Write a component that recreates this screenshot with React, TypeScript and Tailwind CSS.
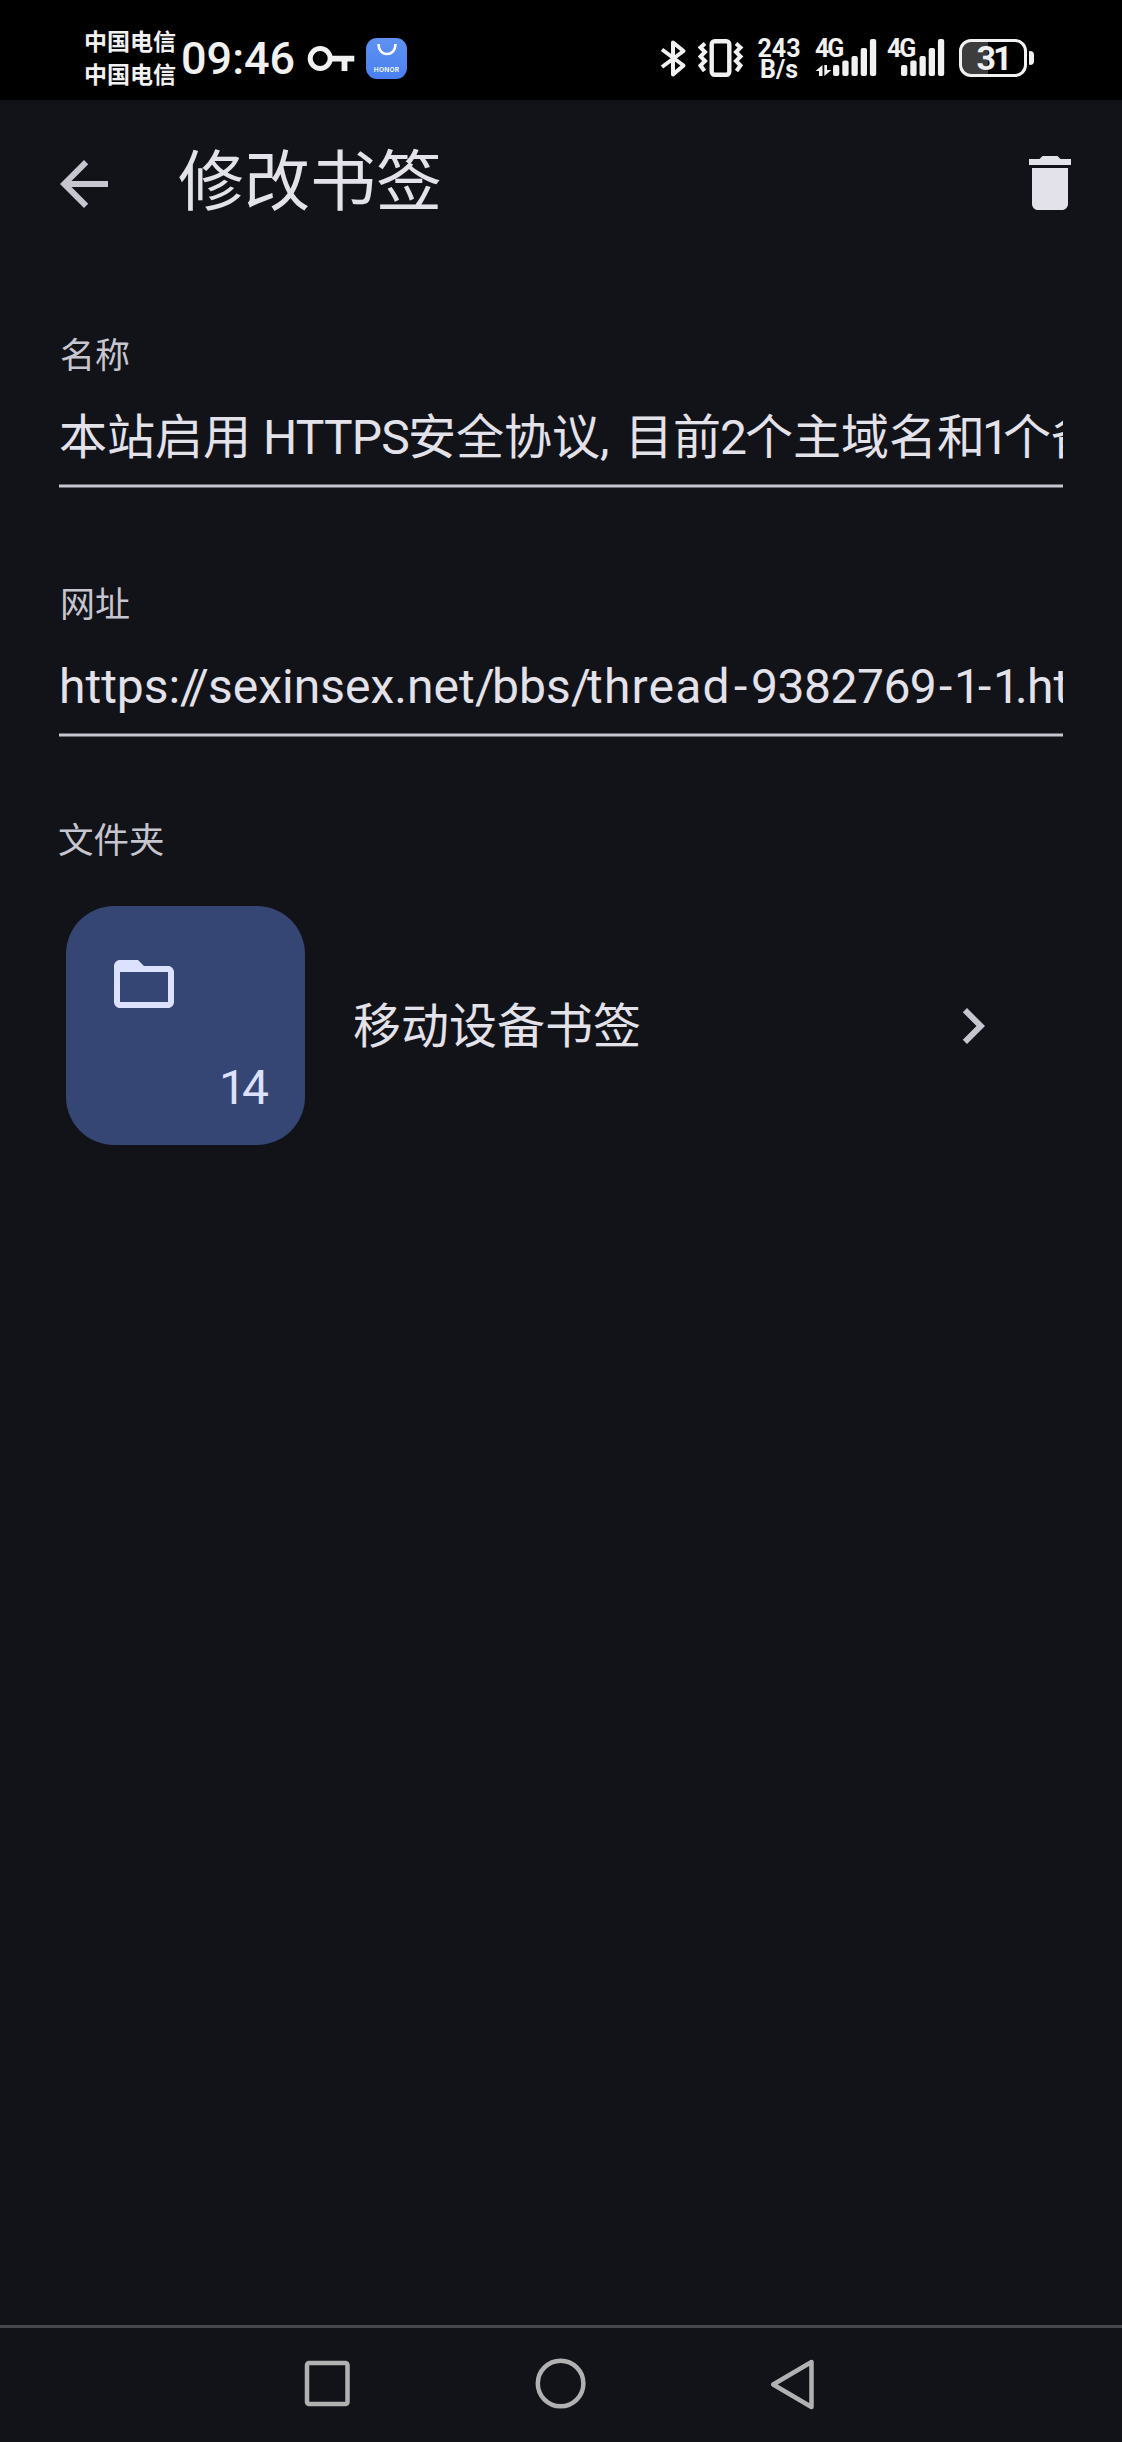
import type { ReactNode } from "react";

const CJK = "font-['Noto_Sans_CJK_SC',sans-serif]";
const MIXED = "font-[Roboto,'Noto_Sans_CJK_SC',sans-serif]";

function Signal({ data = false }: { data?: boolean }) {
  return (
    <svg width="62" height="40" viewBox="0 0 62 40" fill="#f1f1f1" className="absolute left-0 top-0">
      {data && <path d="M0.500 33L7.500 27v11H4v-5zM9.300 27H12v5h4.500L9.300 38z" />}
      <rect x="18" y="27" width="6.300" height="11" rx="2" />
      <rect x="27.300" y="22.500" width="6.300" height="15.500" rx="2" />
      <rect x="36.500" y="18" width="6.300" height="20" rx="2" />
      <rect x="45.700" y="10" width="6.300" height="28" rx="2" />
      <rect x="54.900" y="1" width="6.300" height="37" rx="2" />
    </svg>
  );
}

function StatusBar() {
  return (
    <div className="flex h-[100px] shrink-0 items-start bg-black text-[#f1f1f1]">
      <div className="ml-[84px] mt-[24px] w-[92px] text-[23px] font-bold leading-[33px] whitespace-nowrap font-['Noto_Sans_CJK_SC',sans-serif]">
        <div>中国电信</div>
        <div>中国电信</div>
      </div>
      <div className="ml-[5px] mt-[33px] w-[115px] font-[Roboto,sans-serif] text-[45px] font-medium leading-[52px] whitespace-nowrap">09:46</div>
      <svg className="ml-[10px] mt-[38px]" width="50" height="40" viewBox="0 0 50 40" fill="none" stroke="#f1f1f1">
        <circle cx="14.200" cy="20.500" r="10" strokeWidth="5" />
        <path d="M24 20.600H48.300M38.500 20V33" strokeWidth="5.800" />
      </svg>
      <div className="ml-[10px] mt-[38px] flex h-[41px] w-[41px] flex-col items-center rounded-[11px] bg-linear-to-b from-[#5f92f2] to-[#4a7ff0]">
        <svg className="mt-[5px]" width="24" height="15" viewBox="0 0 24 15" fill="none" stroke="#fff" strokeWidth="2.600">
          <path d="M3.500 1c0 6 3.500 10 8.500 10s8.500-4 8.500-10" />
        </svg>
        <span className="mt-[8px] font-[Inter,sans-serif] text-[6.500px] font-semibold leading-[9px] tracking-[0.300px] text-white">HONOR</span>
      </div>
      <svg className="ml-[253px] mt-[39px]" width="28" height="40" viewBox="0 0 28 40" fill="none" stroke="#f1f1f1" strokeWidth="4" strokeLinejoin="round">
        <path d="M2 10.500L23.500 26.500 13 35.500V3.500L23.500 12 2 28" />
      </svg>
      <svg className="ml-[10px] mt-[38px]" width="46" height="40" viewBox="0 0 46 40" fill="none" stroke="#f1f1f1">
        <rect x="13.700" y="3.200" width="17.600" height="33.600" rx="3" strokeWidth="4.400" />
        <path d="M7 5.500L2.500 9.500 7 14 2.500 18.500 7 23 2.500 27.500 6.500 33M38 5.500L42.500 9.500 38 14 42.500 18.500 38 23 42.500 27.500 38.500 33" strokeWidth="4" />
      </svg>
      <div className="ml-[10px] mt-[38px] w-[50px] text-center font-[Roboto,sans-serif] text-[25px] font-bold leading-[21px] whitespace-nowrap">
        <div>243</div>
        <div>B/s</div>
      </div>
      <div className="relative ml-[11px] mt-[38px] h-[40px] w-[62px]">
        <span className="block w-[28px] font-[Roboto,sans-serif] text-[25px] font-bold leading-[22px] tracking-[-2px]">4G</span>
        <Signal data />
      </div>
      <div className="relative ml-[6px] mt-[38px] h-[40px] w-[62px]">
        <span className="block w-[28px] pl-[4px] font-[Roboto,sans-serif] text-[25px] font-bold leading-[22px] tracking-[-2px]">4G</span>
        <Signal />
      </div>
      <div className="ml-[14px] mt-[39px] flex h-[38px] w-[68px] items-center justify-center rounded-[12px] border-[3px] border-[#f1f1f1] bg-linear-to-r from-[#3d3d3d] from-42% to-black to-42% font-[Roboto,sans-serif] text-[34px] font-bold leading-[34px] tracking-[-3px]">
        31
      </div>
      <div className="ml-[2px] mt-[51px] h-[14px] w-[5px] rounded-r-[4px] rounded-l-[1px] bg-[#f1f1f1]" />
    </div>
  );
}

function Field({ label, children }: { label: string; children: ReactNode }) {
  return (
    <div className="ml-[59px] h-[249px] w-[1004px]">
      <div className={`h-[50px] pl-px text-[35px] leading-[50px] text-[#c6c5d0] ${CJK}`}>{label}</div>
      <div className={`mt-[28px] h-[64px] overflow-hidden text-[48px] leading-[64px] whitespace-nowrap text-[#e3e1e9] ${MIXED}`}>
        {children}
      </div>
      <div className="mt-[14px] h-[4px] border-y border-[#6c6c74] bg-[#c6c5d0]" />
    </div>
  );
}

export default function App() {
  return (
    <div className="flex h-[2442px] w-[1122px] flex-col overflow-hidden bg-[#121318]">
      <StatusBar />
      <header className="flex h-[228px] shrink-0 items-start">
        <svg className="ml-[48px] mt-[48px]" width="72" height="72" viewBox="0 0 24 24" fill="#c6c5d0">
          <path d="M20 11H7.830l5.590-5.590L12 4l-8 8 8 8 1.410-1.410L7.830 13H20v-2z" />
        </svg>
        <h1 className="ml-[58px] mt-[36px] text-[66px] leading-[80px] text-[#e3e1e9] font-['Noto_Sans_CJK_SC',sans-serif]">修改书签</h1>
        <svg className="ml-auto mr-[36px] mt-[47px]" width="72" height="72" viewBox="0 0 24 24" fill="#e3e1e9">
          <path d="M6 19c0 1.100.900 2 2 2h8c1.100 0 2-.900 2-2V7H6v12zM19 4h-3.500l-1-1h-5l-1 1H5v2h14V4z" />
        </svg>
      </header>
      <main className="flex-1">
        <Field label="名称">
          <div className="flex">
            <span>本站启用</span>
            <span className="w-[157px] shrink-0 pl-[12px] tracking-[-0.800px]">HTTPS</span>
            <span>安全协议</span>
            <span className="w-[25px] shrink-0">,</span>
            <span>目前</span>
            <span className="w-[24px] shrink-0 -indent-[1px] tracking-[-3px]">2</span>
            <span>个主域名和</span>
            <span className="w-[18px] shrink-0 -indent-[3px] tracking-[-6px]">1</span>
            <span>个备用</span>
          </div>
        </Field>
        <Field label="网址">
          <div className="flex">
            <span className="w-[121px] shrink-0">https:</span>
            <span className="w-[28px] shrink-0 tracking-[-5.500px]">//</span>
            <span className="w-[267px] shrink-0">sexinsex.net</span>
            <span className="w-[17px] shrink-0 tracking-[-3px]">/</span>
            <span className="w-[79px] shrink-0">bbs</span>
            <span className="w-[16px] shrink-0 tracking-[-4px]">/</span>
            <span className="w-[144px] shrink-0 tracking-[1.200px]">thread</span>
            <span className="w-[20px] shrink-0 pl-[3px]">-</span>
            <span className="w-[186px] shrink-0 tracking-[-0.500px]">9382769</span>
            <span className="w-[17px] shrink-0 pl-[2px]">-</span>
            <span className="w-[22px] shrink-0 tracking-[-5px]">1</span>
            <span className="w-[17px] shrink-0 pl-[2px]">-</span>
            <span className="w-[22px] shrink-0 tracking-[-5px]">1</span>
            <span className="w-[12px] shrink-0 tracking-[-1px]">.</span>
            <span>html</span>
          </div>
        </Field>
        <div className={`ml-[58px] mt-[-13px] h-[50px] text-[35.500px] leading-[50px] text-[#c6c5d0] ${CJK}`}>文件夹</div>
        <div className="mt-[43px] ml-[66px] flex h-[239px] items-center">
          <div className="flex h-[239px] w-[239px] flex-col rounded-[48px] bg-[#354574] text-[#dbe1ff]">
            <svg className="ml-[42px] mt-[42px]" width="72" height="72" viewBox="0 0 24 24" fill="currentColor">
              <path d="M9.170 6H20c1.100 0 2 .900 2 2v10c0 1.100-.900 2-2 2H4c-1.100 0-2-.900-2-2L2.010 6c0-1.100.890-2 1.990-2h6l2 2zM20 8H4v10h16V8z" />
            </svg>
            <div className="mt-[38px] pr-[40px] text-right font-[Roboto,sans-serif] text-[48px] leading-[60px] tracking-[-4px]">14</div>
          </div>
          <div className="mb-[7px] ml-[48px] text-[48px] leading-[64px] text-[#e3e1e9] font-['Noto_Sans_CJK_SC',sans-serif]">移动设备书签</div>
          <svg className="ml-auto mr-[113px]" width="72" height="72" viewBox="0 0 24 24" fill="#c6c5d0">
            <path d="M10 6L8.590 7.410 13.170 12l-4.580 4.590L10 18l6-6z" />
          </svg>
        </div>
      </main>
      <nav className="flex h-[117px] shrink-0 items-center border-t-[3px] border-[#47464c]">
        <svg className="ml-[304px]" width="46" height="52" viewBox="0 0 46 52" fill="none" stroke="#b1b1b1" strokeWidth="4.500">
          <rect x="3" y="4" width="40.500" height="41" rx="2" />
        </svg>
        <svg className="ml-[184px]" width="54" height="54" viewBox="0 0 54 54" fill="none" stroke="#b1b1b1" strokeWidth="4.500">
          <circle cx="26.600" cy="25.500" r="22.800" />
        </svg>
        <svg className="ml-[181px]" width="48" height="54" viewBox="0 0 48 54" fill="none" stroke="#b1b1b1" strokeWidth="4.500" strokeLinejoin="round">
          <path d="M4.200 26.500L42.500 4V49z" />
        </svg>
      </nav>
    </div>
  );
}
